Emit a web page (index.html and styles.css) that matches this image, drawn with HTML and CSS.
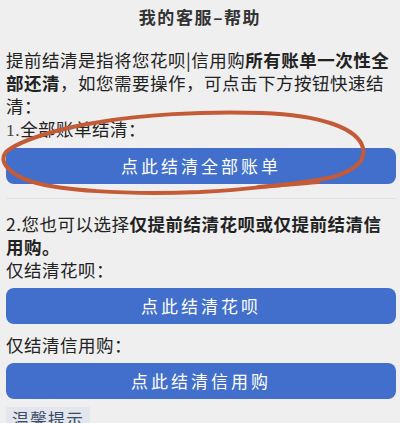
FILE: index.html
```html
<!DOCTYPE html>
<html lang="zh">
<head>
<meta charset="utf-8">
<link rel="stylesheet" href="styles.css">
</head>
<body>
<div class="page">
  <h1 class="title">我的客服–帮助</h1>
  <p class="text">提前结清是指将您花呗|信用购<b>所有账单一次性全部还清</b>，如您需要操作，可点击下方按钮快速结清：</p>
  <p class="text"><span class="num">1.</span>全部账单结清：</p>
  <div class="btn btn-first">点此结清全部账单</div>
  <div class="sep"></div>
  <p class="text sec2">2.您也可以选择<b>仅提前结清花呗或仅提前结清信用购。</b></p>
  <p class="text">仅结清花呗：</p>
  <div class="btn">点此结清花呗</div>
  <p class="text label">仅结清信用购：</p>
  <div class="btn">点此结清信用购</div>
  <div class="tip">温馨提示</div>
  <svg class="circle" width="400" height="423" viewBox="0 0 400 423">
    <path d="M 200 192 C 240 190, 300 184, 333 177 C 355 170, 366 160, 363 148 C 358 128, 320 115, 262 113 C 200 111, 140 115, 100 122 C 60 128, 20 140, 6 152 C -2 162, 10 175, 33 182 C 60 190, 120 195, 200 192" fill="none" stroke="#c45b36" stroke-width="4" stroke-linecap="round"/>
    <path d="M 258 187 C 280 185, 300 184, 318 182" fill="none" stroke="#c45b36" stroke-width="4" stroke-linecap="round"/>
  </svg>
</div>
</body>
</html>
```
FILE: styles.css
```css
html, body {
  margin: 0;
  padding: 0;
  background: #efefef;
  height: 423px;
  overflow: hidden;
}
.page {
  position: relative;
  padding: 0 4px 0 6px;
  font-family: "Noto Sans CJK SC", "Noto Sans", sans-serif;
  color: #222;
}
.title {
  margin: 0;
  height: 34px;
  line-height: 34px;
  font-size: 17px;
  font-weight: 600;
  letter-spacing: 1.6px;
  text-align: center;
  color: #333;
  padding-right: 2px;
}
.text {
  margin: 0;
  font-size: 17.5px;
  line-height: 23px;
  letter-spacing: 0.5px;
}
.page > .title + .text {
  margin-top: 14px;
}
.text b {
  font-weight: 700;
}
.num {
  font-family: "Liberation Serif", serif;
  color: #444;
}
.btn {
  margin-top: 7px;
  height: 36px;
  line-height: 36px;
  background: #416fcb;
  border-radius: 8px;
  color: #fff;
  text-align: center;
  font-size: 17px;
  letter-spacing: 3px;
}
.btn-first {
  margin-top: 6px;
}
.sep {
  height: 1px;
  background: #e2e2e2;
  margin: 14px 0 0 0;
}
.sec2 {
  margin-top: 13px;
}
.label {
  margin-top: 9px;
  margin-bottom: 3px;
}
.tip {
  display: inline-block;
  margin-top: 8px;
  padding: 0 6px;
  background: #e3e6ec;
  color: #3b4b66;
  font-size: 17px;
  line-height: 24px;
  letter-spacing: 1px;
}
.circle {
  position: absolute;
  left: 0;
  top: 0;
  pointer-events: none;
}
```
